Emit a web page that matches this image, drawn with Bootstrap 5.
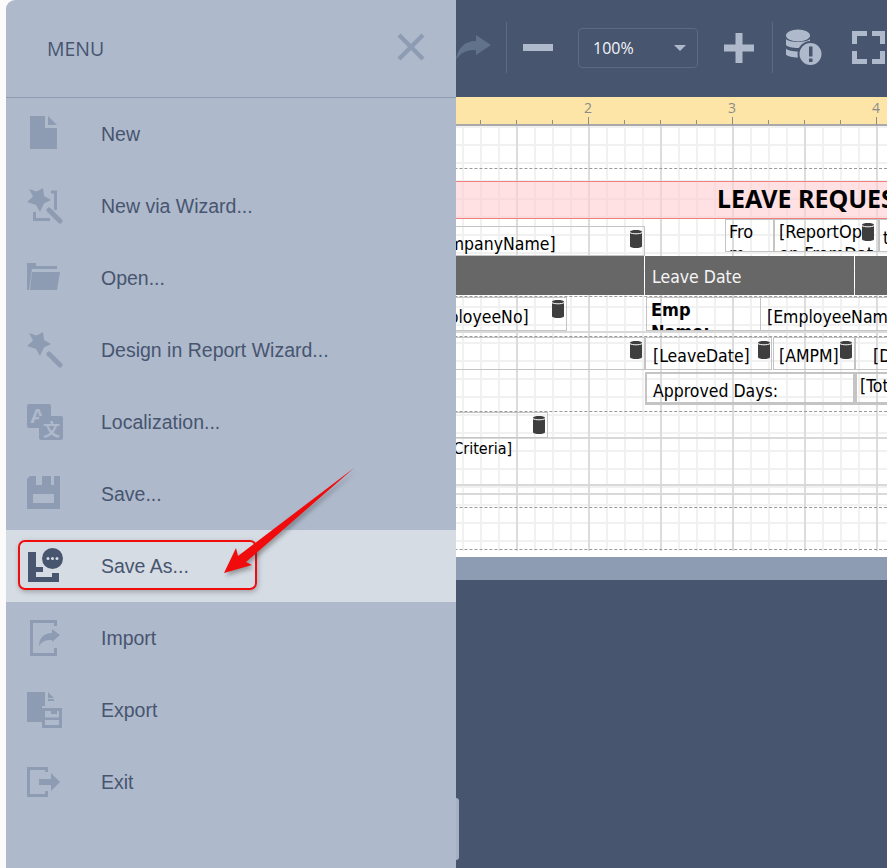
<!DOCTYPE html>
<html lang="en">
<head>
  <meta charset="UTF-8">
  <title>Report Designer</title>
  <link href="https://cdn.jsdelivr.net/npm/bootstrap@5.3.2/dist/css/bootstrap.min.css" rel="stylesheet">
  <style>
    html, body { margin: 0; height: 868px; overflow: hidden; background: #47556f; }
    .app-frame { position: relative; width: 887px; height: 868px; overflow: hidden; background: #47556f; }

    /* toolbar */
    .tool-bar { height: 97px; padding-left: 456px; padding-bottom: 2px; overflow: hidden; }
    .tool-bar svg { flex: none; display: block; }
    .tool-sep { flex: none; width: 1px; height: 51px; background: #5d6a83; }
    .zoom-box { flex: none; width: 120px; height: 40px; border: 1px solid #5d6a83; border-radius: 4px; padding: 0 11px 0 14px; color: #f2f4f8; font: 16px "Open Sans", sans-serif; }
    .zoom-caret { width: 0; height: 0; border-left: 6px solid transparent; border-right: 6px solid transparent; border-top: 6px solid #aeb9cc; }

    /* ruler and design surface */
    .ruler-strip { position: relative; height: 29px; background-color: #fde5a8; border-bottom: 2px solid #a9a9a9; background-image: linear-gradient(90deg, #8d8d8d 1px, transparent 1px); background-size: 36px 6px; background-position: 12px 23px; background-repeat: repeat-x; }
    .ruler-num { position: absolute; top: 1px; color: #8b8b8b; font: 14px "Open Sans", sans-serif; transform: translateX(-50%); }
    .ruler-big { position: absolute; top: 20px; width: 1px; height: 8px; background: #8d8d8d; }
    .design-surface { position: relative; height: 431px; background-color: #fff; overflow: hidden; font-family: "DejaVu Sans Condensed", "Noto Sans", sans-serif; color: #000; }
    .grid-layer { position: absolute; left: 0; right: 0; top: 0; height: 425px;
      background-image:
        linear-gradient(90deg, #dcdcdc 2px, transparent 2px),
        linear-gradient(90deg, #f1f1f1 2px, transparent 2px),
        linear-gradient(#f1f1f1 2px, transparent 2px);
      background-size: 72px 100%, 18px 100%, 100% 18px;
      background-position: 12px 0, 12px 0, 0 18px; }
    .pink-band { position: absolute; left: 0; right: 0; top: 55px; height: 38px; background: rgba(255, 205, 210, .6); border-top: 1px solid #f08080; border-bottom: 1px solid #f08080; }
    .head-cell { position: absolute; background: #676767; color: #f5f5f5; font-size: 17.5px; line-height: 43px; padding-left: 7px; }
    .rpt-line { position: absolute; left: 0; right: 0; height: 0; border-top: 2px solid #d9d9d9; }
    .rpt-line-dash { border-top: 1px dashed #9a9a9a; }
    .rpt-ctl { position: absolute; overflow: hidden; border: 1px solid #c4c4c4; font-size: 17.5px; line-height: 24px; white-space: pre; }
    .rpt-ctl-wrap { font-size: 18px; line-height: 22px; }
    .rpt-ctl-thick { border-width: 2px 3px 3px 2px; }
    .rpt-title { position: absolute; white-space: nowrap; font-family: "Noto Sans", sans-serif; font-weight: 700; font-size: 25px; line-height: 36px; }
    .rpt-note { position: absolute; white-space: nowrap; font-size: 16px; line-height: 24px; }
    .db-mark { position: absolute; width: 12px; height: 18px; }
    .work-foot { height: 23px; background: #8e9cb3; }

    /* slide out menu */
    .menu-wrap { position: absolute; left: 0; top: 0; width: 456px; height: 868px; padding-left: 6px; background: #fbfbfb; z-index: 5; }
    .menu-panel { position: relative; height: 868px; background: #aeb9cc; border-top-left-radius: 9px; font-family: "Liberation Sans", Arial, sans-serif; }
    .menu-top { height: 98px; border-bottom: 1px solid #8e9cb3; padding: 0 31px 0 41px; }
    .menu-title { color: #47556f; font: 19.5px "Open Sans", sans-serif; margin-bottom: 1px; }
    .menu-close { margin-bottom: 4px; }
    .menu-list { border-radius: 0; }
    .menu-row { height: 72px; padding: 0 0 0 21px; background: transparent; border: 0; color: #47556f; font-size: 19.5px; }
    .menu-row span { padding-top: 2px; }
    .menu-row svg { flex: none; display: block; width: 36px; height: 36px; margin-right: 38px; }
    .menu-row-on { background: #d6dce4; }
    .menu-tab { position: absolute; left: 450px; top: 798px; width: 3px; height: 62px; background: #a6b1c5; border-radius: 0 3px 3px 0; }
    .ico { fill: #8e9cb3; }
    .ico-cut { fill: #aeb9cc; }
    .ico-line { fill: none; stroke: #8e9cb3; }

    /* callout drawn on the screenshot */
    .callout-box { position: absolute; left: 18px; top: 540px; width: 239px; height: 50px; border: 2px solid #f00c0c; border-radius: 7px; box-shadow: 1px 2px 5px rgba(60, 60, 60, .35); z-index: 6; }
    .callout-arrow { position: absolute; left: 0; top: 0; width: 887px; height: 868px; z-index: 7; pointer-events: none; filter: drop-shadow(2px 3px 2px rgba(50, 50, 50, .4)); }
  </style>
</head>
<body>

<svg width="0" height="0" class="position-absolute">
  <defs>
    <symbol id="wandStar" viewBox="0 0 36 36">
      <polygon points="16,0 17,8 24,12 17,15.500 13,24 9,17 0,14 6,8.500 2,1 9.500,3.500"/>
    </symbol>
    <symbol id="dbMark" viewBox="0 0 12 18">
      <path d="M0 2C0 .5 3 0 6 0s6 .5 6 2v14c0 1.500-3 2-6 2s-6-.5-6-2z" fill="#3e3e3e"/>
      <path d="M0 2.600c2 1.600 10 1.600 12 0" fill="none" stroke="#fff" stroke-width="1"/>
    </symbol>
  </defs>
</svg>

<div class="app-frame">

  <!-- Workspace -->
  <div>
    <div class="tool-bar d-flex align-items-center">
      <svg width="35" height="26" style="margin-right:15px"><path d="M35 10L20 0V6C8 6 1 14 0 25C5 17 11 15 20 15V20Z" fill="#63728b"/></svg>
      <div class="tool-sep"></div>
      <svg width="30" height="8" style="margin-left:16px"><rect width="30" height="7" fill="#aeb9cc"/></svg>
      <div class="zoom-box d-flex align-items-center justify-content-between" style="margin-left:25px">
        <span>100%</span><span class="zoom-caret"></span>
      </div>
      <svg width="30" height="30" style="margin-left:26px"><path d="M11.500 0h7v11.500H30v7H18.500V30h-7V18.500H0v-7h11.500z" fill="#aeb9cc"/></svg>
      <div class="tool-sep" style="margin-left:18px"></div>
      <svg width="37" height="37" style="margin-left:12px">
        <ellipse cx="13" cy="6.500" rx="12" ry="6" fill="#aeb9cc"/>
        <path d="M1 10c3 4 21 4 24 0v6c-3 4-21 4-24 0zM1 19.500c3 4 21 4 24 0v6c-3 4-21 4-24 0z" fill="#aeb9cc"/>
        <circle cx="25.500" cy="25" r="13" fill="#47556f"/>
        <circle cx="25.500" cy="25" r="11" fill="#aeb9cc"/>
        <rect x="24" y="17.500" width="3.500" height="10" fill="#47556f"/>
        <rect x="24" y="29.500" width="3.500" height="3.500" fill="#47556f"/>
      </svg>
      <svg width="35" height="33" style="margin-left:30px">
        <path d="M2.500 13V2.500H15M20 2.500H30.500V13M2.500 20V30.500H15M20 30.500H30.500V20" fill="none" stroke="#aeb9cc" stroke-width="5"/>
      </svg>
    </div>

    <div class="ruler-strip" id="ruler"></div>
    <div class="design-surface" id="surface">
      <div class="grid-layer"></div>
      <div class="pink-band"></div>
    </div>
    <div class="work-foot"></div>
  </div>

  <!-- Menu -->
  <div class="menu-wrap">
    <div class="menu-panel">
      <div class="menu-top d-flex align-items-center justify-content-between">
        <span class="menu-title">MENU</span>
        <svg class="menu-close" width="28" height="28" viewBox="0 0 28 28"><path d="M2 2L26 26M26 2L2 26" class="ico-line" stroke-width="4.500"/></svg>
      </div>
      <ul class="list-group list-group-flush menu-list">
        <li class="list-group-item menu-row d-flex align-items-center">
          <svg viewBox="0 0 36 36"><path class="ico" d="M3 0H18V12H30V33H3Z"/><path class="ico" d="M21 0L30 9H21Z"/></svg>
          <span>New</span>
        </li>
        <li class="list-group-item menu-row d-flex align-items-center">
          <svg viewBox="0 0 36 36">
            <use href="#wandStar" class="ico" width="36" height="36"/>
            <path class="ico-line" stroke-width="3" d="M24 4H28.500V22M7.500 24V31.500H23"/>
            <path class="ico-line" stroke-width="5" stroke-linecap="round" d="M22 22L33 33"/>
          </svg>
          <span>New via Wizard...</span>
        </li>
        <li class="list-group-item menu-row d-flex align-items-center">
          <svg viewBox="0 0 36 36">
            <path class="ico" d="M0 3H9V6H30V9H5L2 30H0Z"/>
            <path class="ico" d="M5 12H33L30 30H3Z"/>
          </svg>
          <span>Open...</span>
        </li>
        <li class="list-group-item menu-row d-flex align-items-center">
          <svg viewBox="0 0 36 36">
            <use href="#wandStar" class="ico" width="36" height="36"/>
            <path class="ico-line" stroke-width="5" stroke-linecap="round" d="M22 22L33 33"/>
          </svg>
          <span>Design in Report Wizard...</span>
        </li>
        <li class="list-group-item menu-row d-flex align-items-center">
          <svg viewBox="0 0 36 36">
            <rect class="ico" width="24" height="24" rx="2"/>
            <text x="3" y="19" font-size="21" font-weight="700" font-family="Liberation Sans" class="ico-cut">A</text>
            <rect class="ico" x="12" y="12" width="24" height="24" rx="2"/>
            <text x="16" y="32" font-size="17" font-weight="700" font-family="Noto Sans CJK SC" class="ico-cut">文</text>
          </svg>
          <span>Localization...</span>
        </li>
        <li class="list-group-item menu-row d-flex align-items-center">
          <svg viewBox="0 0 36 36">
            <path class="ico" d="M3 0H9V9H15V0H24V9H27V0H33V33H0V3Z"/>
            <rect class="ico-cut" x="6" y="18" width="21" height="9"/>
          </svg>
          <span>Save...</span>
        </li>
        <li class="list-group-item menu-row menu-row-on d-flex align-items-center">
          <svg viewBox="0 0 36 36">
            <path fill="#47556f" d="M1 4H9V19H16V24H9V29H25V25H32V34H1Z"/>
            <circle cx="25.500" cy="10.500" r="10.500" fill="#47556f"/>
            <circle cx="21" cy="10.500" r="1.500" fill="#d6dce4"/><circle cx="25.500" cy="10.500" r="1.500" fill="#d6dce4"/><circle cx="30" cy="10.500" r="1.500" fill="#d6dce4"/>
          </svg>
          <span>Save As...</span>
        </li>
        <li class="list-group-item menu-row d-flex align-items-center">
          <svg viewBox="0 0 36 36">
            <path class="ico-line" stroke-width="3" d="M28.500 6V1.500H4.500V34.500H28.500V28"/>
            <path class="ico" d="M33 15L25 9V13C17 13 12 18 12 26C15 21 19 20 25 20V22Z"/>
          </svg>
          <span>Import</span>
        </li>
        <li class="list-group-item menu-row d-flex align-items-center">
          <svg viewBox="0 0 36 36">
            <path class="ico" d="M0 0H18V14H15V30H0Z"/>
            <path class="ico" d="M21 0L27 6H21ZM21 7H27V9H21Z"/>
            <path class="ico-line" stroke-width="3" d="M16.500 17.500H33.500V34.500H16.500Z"/>
            <rect class="ico" x="24" y="16" width="6" height="6"/>
            <rect class="ico" x="16" y="25.500" width="18" height="2.500"/>
          </svg>
          <span>Export</span>
        </li>
        <li class="list-group-item menu-row d-flex align-items-center">
          <svg viewBox="0 0 36 36">
            <path class="ico-line" stroke-width="3" d="M19.500 8V4.500H1.500V31.500H19.500V27"/>
            <path class="ico" d="M12 15H24V9L33 18L24 27V21H12Z"/>
          </svg>
          <span>Exit</span>
        </li>
      </ul>
      <div class="menu-tab"></div>
    </div>
  </div>

  <!-- Callout -->
  <div class="callout-box"></div>
  <svg class="callout-arrow" viewBox="0 0 887 868">
    <polygon points="354,468 246,562 252,565 224,573 236,548 238,556" fill="#f00c0c"/>
  </svg>
</div>

<script src="https://cdn.jsdelivr.net/npm/bootstrap@5.3.2/dist/js/bootstrap.bundle.min.js"></script>
<script>
  // y values are page coordinates, the surface starts at y = 126
  const surfaceTop = 126;
  const surface = document.getElementById("surface");
  const ruler = document.getElementById("ruler");

  [[588, "2"], [732, "3"], [876, "4"]].forEach(([x, label]) => {
    const num = document.createElement("span");
    num.className = "ruler-num";
    num.style.left = x + "px";
    num.textContent = label;
    ruler.appendChild(num);
    const tick = document.createElement("span");
    tick.className = "ruler-big";
    tick.style.left = x + "px";
    ruler.appendChild(tick);
  });

  function place(el, x, y, w, h) {
    el.style.left = x + "px";
    el.style.top = (y - surfaceTop) + "px";
    if (w) el.style.width = w + "px";
    if (h) el.style.height = h + "px";
    surface.appendChild(el);
  }

  const lines = [
    [168, true], [296, true], [336, true], [369, true], [411, true], [507, true], [549, true],
    [331, false], [437, false], [484, false], [493, false]
  ];
  lines.forEach(([y, dashed]) => {
    const line = document.createElement("div");
    line.className = "rpt-line" + (dashed ? " rpt-line-dash" : "");
    line.style.top = (y - surfaceTop) + "px";
    surface.appendChild(line);
  });

  const title = document.createElement("div");
  title.className = "rpt-title";
  title.textContent = "LEAVE REQUEST";
  place(title, 717, 180);

  [[400, 244, ""], [645, 209, "Leave Date"], [855, 60, ""]].forEach(([x, w, text]) => {
    const cell = document.createElement("div");
    cell.className = "head-cell";
    cell.textContent = text;
    place(cell, x, 256, w, 39);
  });

  const controls = [
    { x: 400, y: 226, w: 245, h: 30, pl: 21, pt: 5, text: "[CompanyName]" },
    { x: 725, y: 219, w: 49, h: 33, pl: 3, pt: 1, text: "Fro\nm", wrap: true },
    { x: 774, y: 219, w: 105, h: 33, pl: 4, pt: 1, text: "[ReportOpti\non.FromDat", wrap: true },
    { x: 879, y: 219, w: 30, h: 33, pl: 3, pt: 6, text: "to" },
    { x: 400, y: 297, w: 167, h: 34, pl: 16, pt: 7, text: "[EmployeeNo]" },
    { x: 646, y: 297, w: 115, h: 34, pl: 4, pt: 1, text: "Emp\nName:", bold: true, wrap: true },
    { x: 760, y: 297, w: 140, h: 34, pl: 6, pt: 7, text: "[EmployeeName]" },
    { x: 400, y: 337, w: 245, h: 33, pl: 0, pt: 0, text: "" },
    { x: 645, y: 337, w: 127, h: 33, pl: 7, pt: 6, text: "[LeaveDate]" },
    { x: 773, y: 337, w: 82, h: 33, pl: 5, pt: 6, text: "[AMPM]" },
    { x: 855, y: 337, w: 50, h: 33, pl: 17, pt: 6, text: "[Days]" },
    { x: 645, y: 372, w: 211, h: 33, pl: 6, pt: 5, text: "Approved Days:", thick: true },
    { x: 855, y: 372, w: 50, h: 33, pl: 3, pt: 0, text: "[Total]", thick: true },
    { x: 400, y: 412, w: 148, h: 26, pl: 0, pt: 0, text: "" }
  ];
  controls.forEach(c => {
    const box = document.createElement("div");
    box.className = "rpt-ctl" + (c.thick ? " rpt-ctl-thick" : "") + (c.wrap ? " rpt-ctl-wrap" : "");
    box.textContent = c.text;
    box.style.paddingLeft = c.pl + "px";
    box.style.paddingTop = c.pt + "px";
    if (c.bold) box.style.fontWeight = 700;
    place(box, c.x, c.y, c.w, c.h);
  });

  const criteria = document.createElement("div");
  criteria.className = "rpt-note";
  criteria.textContent = "[ReportCriteria]";
  place(criteria, 400, 437);
  // only the tail of this expression is clear of the menu
  criteria.style.left = (512 - criteria.offsetWidth) + "px";

  [[630, 226], [552, 296], [630, 337], [758, 337], [840, 337], [862, 219], [533, 412]].forEach(([x, y]) => {
    const holder = document.createElement("div");
    holder.className = "db-mark";
    holder.innerHTML = '<svg width="12" height="18"><use href="#dbMark"/></svg>';
    place(holder, x, y);
  });
</script>
</body>
</html>
